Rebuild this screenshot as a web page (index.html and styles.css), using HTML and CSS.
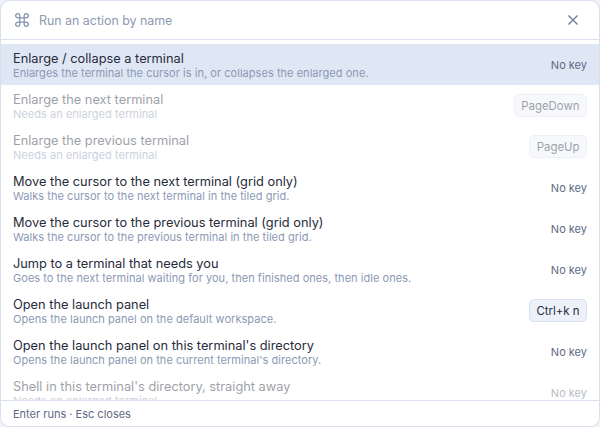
FILE: index.html
```html
<!DOCTYPE html>
<html>
<head>
    <link rel="stylesheet" href="styles.css">
</head>
<body>
    <div class="palette">
        <div class="search">
            <svg class="search-icon" width="16" height="16" viewBox="0 0 16 16">
                <path d="M5.8 5.8h4.4v4.4H5.8zM5.8 5.8H4A2.1 2.1 0 1 1 5.8 4zM10.2 5.8V4A2.1 2.1 0 1 1 12 5.8zM10.2 10.2H12A2.1 2.1 0 1 1 10.2 12zM5.8 10.2V12A2.1 2.1 0 1 1 4 10.2z"/>
            </svg>
            <span class="search-text">Run an action by name</span>
            <svg class="close" width="12" height="12" viewBox="0 0 12 12">
                <path d="M1.5 1.5l9 9M10.5 1.5l-9 9"/>
            </svg>
        </div>
        <div class="list">
            <div class="row active">
                <div class="info">
                    <div class="title">Enlarge / collapse a terminal</div>
                    <div class="desc">Enlarges the terminal the cursor is in, or collapses the enlarged one.</div>
                </div>
                <span class="nokey">No key</span>
            </div>
            <div class="row disabled">
                <div class="info">
                    <div class="title">Enlarge the next terminal</div>
                    <div class="desc">Needs an enlarged terminal</div>
                </div>
                <span class="key">PageDown</span>
            </div>
            <div class="row disabled">
                <div class="info">
                    <div class="title">Enlarge the previous terminal</div>
                    <div class="desc">Needs an enlarged terminal</div>
                </div>
                <span class="key">PageUp</span>
            </div>
            <div class="row">
                <div class="info">
                    <div class="title">Move the cursor to the next terminal (grid only)</div>
                    <div class="desc">Walks the cursor to the next terminal in the tiled grid.</div>
                </div>
                <span class="nokey">No key</span>
            </div>
            <div class="row">
                <div class="info">
                    <div class="title">Move the cursor to the previous terminal (grid only)</div>
                    <div class="desc">Walks the cursor to the previous terminal in the tiled grid.</div>
                </div>
                <span class="nokey">No key</span>
            </div>
            <div class="row">
                <div class="info">
                    <div class="title">Jump to a terminal that needs you</div>
                    <div class="desc">Goes to the next terminal waiting for you, then finished ones, then idle ones.</div>
                </div>
                <span class="nokey">No key</span>
            </div>
            <div class="row">
                <div class="info">
                    <div class="title">Open the launch panel</div>
                    <div class="desc">Opens the launch panel on the default workspace.</div>
                </div>
                <span class="key">Ctrl+k n</span>
            </div>
            <div class="row">
                <div class="info">
                    <div class="title">Open the launch panel on this terminal's directory</div>
                    <div class="desc">Opens the launch panel on the current terminal's directory.</div>
                </div>
                <span class="nokey">No key</span>
            </div>
            <div class="row disabled">
                <div class="info">
                    <div class="title">Shell in this terminal's directory, straight away</div>
                    <div class="desc">Needs an enlarged terminal</div>
                </div>
                <span class="nokey">No key</span>
            </div>
        </div>
        <div class="footer">Enter runs · Esc closes</div>
    </div>
</body>
</html>
```

FILE: styles.css
```css
* {
    box-sizing: border-box;
}

body {
    margin: 0;
    height: 427px;
    overflow: hidden;
    background: #eef1f7;
    font-family: 'Inter', sans-serif;
}

.palette {
    height: 427px;
    display: flex;
    flex-direction: column;
    background: #fff;
    border: 1px solid #d8e0ee;
    border-radius: 10px;
    overflow: hidden;
}

.search {
    height: 39px;
    flex: none;
    display: flex;
    align-items: center;
    padding: 0 20px 0 13px;
    border-bottom: 1px solid #d8e0ee;
}

.search-icon {
    flex: none;
    margin-right: 9px;
    fill: none;
    stroke: #8493b0;
    stroke-width: 1.3;
}

.search-text {
    flex: 1;
    font-size: 12.4px;
    color: #8c99b2;
}

.close {
    fill: none;
    stroke: #6f7d99;
    stroke-width: 1.4;
}

.list {
    flex: 1;
    min-height: 0;
    overflow: hidden;
    padding-top: 4px;
}

.row {
    height: 41px;
    display: flex;
    align-items: center;
    justify-content: space-between;
    padding: 0 12px;
}

.row.active {
    background: #e0e7f4;
}

.info {
    padding-top: 2px;
}

.title {
    font-size: 12.8px;
    line-height: 15px;
    color: #262c3b;
}

.desc {
    font-size: 11px;
    line-height: 14px;
    letter-spacing: 0.04px;
    color: #8c99b5;
}

.nokey {
    font-size: 11px;
    padding-top: 1px;
    color: #5d6984;
}

.key {
    padding: 0 6.5px;
    height: 23px;
    display: flex;
    align-items: center;
    font-size: 11.4px;
    color: #262c3b;
    background: #edf1f9;
    border: 1px solid #d8e0ee;
    border-radius: 5px;
}

.row.disabled > * {
    opacity: 0.45;
}

.footer {
    height: 26px;
    flex: none;
    display: flex;
    align-items: center;
    padding: 0 12px;
    font-size: 11px;
    color: #5d6984;
    border-top: 1px solid #d8e0ee;
    background: #fff;
}
```
